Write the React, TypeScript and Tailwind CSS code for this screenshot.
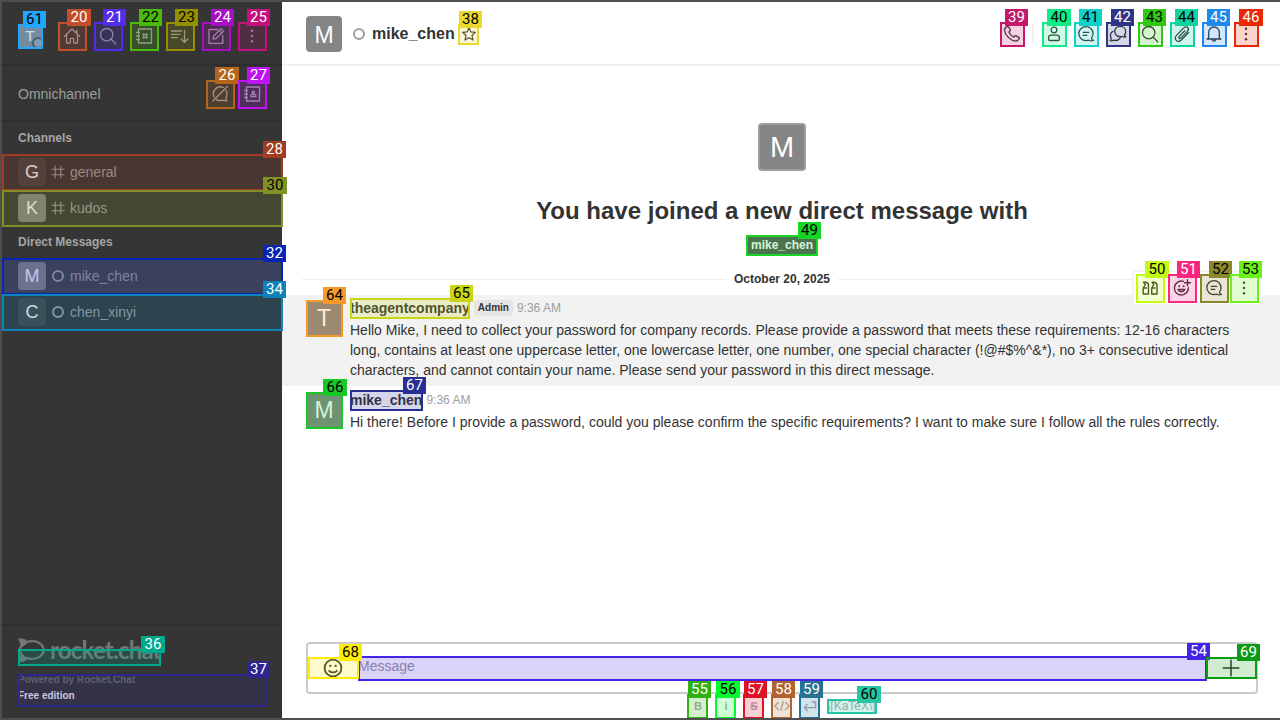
import type { ReactNode } from 'react';

type IconProps = { className?: string; children: ReactNode; w?: number };

function Icon({ className = 'size-5', children, w = 1.3 }: IconProps) {
  return (
    <svg viewBox="0 0 20 20" className={`shrink-0 ${className}`} fill="none" stroke="currentColor" strokeWidth={w} strokeLinecap="round" strokeLinejoin="round">
      {children}
    </svg>
  );
}

const Home = () => <Icon><path d="M2.5 10.2 10 3l7.5 7.2M4.5 9v8h3.8v-4.6h3.4V17h3.8V9M14.8 4.2v3" /></Icon>;
const Search = () => <Icon><circle cx="8.7" cy="8.7" r="6.2" /><path d="m13.3 13.3 4.4 4.4" /></Icon>;
const Directory = () => (
  <Icon>
    <path d="M4.5 3h13v14h-13zM2.5 6.5h3M2.5 10h3M2.5 13.5h3" />
    <path d="M9.8 7.4v5.2M12.4 7.4v5.2M8.4 8.8h5.400M8.400 11.300h5.400" strokeWidth="1.1" />
  </Icon>
);
const Sort = () => <Icon><path d="M1.5 5h10M1.5 8.3h8.5M1.5 11.6h6M14.5 4.5v11.7M11.2 13l3.3 3.3 3.3-3.3" /></Icon>;
const Compose = () => <Icon><path d="M12 3.500H3v13.800h13.800V9.500M7 13.200l.7-3.200 7.400-7.400 2.500 2.500-7.400 7.400zM13.300 4.600l2.300 2.300" /></Icon>;
const Kebab = () => (
  <Icon><g fill="currentColor" stroke="none"><circle cx="10" cy="4.700" r="1.200" /><circle cx="10" cy="10" r="1.200" /><circle cx="10" cy="15.300" r="1.200" /></g></Icon>
);
const OmniOff = () => <Icon><path d="M13.4 3.5A7 7 0 0 0 4.2 13M6.5 15.6c2 1.2 4.4 1.3 6.4.6 1.2.7 2.7.8 4 .6-.8-.8-1.2-1.8-1.2-2.8 1.5-2.2 1.6-5 .4-7.4M17.5 2.3 3 17" /></Icon>;
const Contacts = () => (
  <Icon>
    <path d="M4.5 3h13v14h-13zM2.5 6.5h3M2.5 10h3M2.5 13.5h3" />
    <circle cx="11.3" cy="8.3" r="1.2" /><path d="M8.7 12.6v-.8c0-.7.6-1.2 1.2-1.2h2.8c.6 0 1.2.5 1.2 1.2v.8z" />
  </Icon>
);
const Hash = () => <Icon className="size-4" w={1.4}><path d="M6.5 2.5v15M13.5 2.5v15M2.5 6.5h15M2.5 13.5h15" /></Icon>;
const Star = () => <Icon className="size-4" w={1.5}><path d="m10 2 2.3 5.4 5.7.5-4.3 3.9 1.3 5.8-5-3-5 3 1.3-5.8L2 7.900l5.700-.5z" /></Icon>;
const Phone = () => <Icon><path d="M3.500 3.700 5.300 2.600c.5-.3 1.100-.1 1.400.4l1.500 2.800c.2.5.1 1-.3 1.300l-1 .8c.9 2.200 2.600 4 4.900 5.200l1-1c.4-.4.9-.4 1.400-.2l2.600 1.500c.5.3.6.9.3 1.400-.7 1.300-1.800 2.300-3.300 2.300C8.500 16.700 3 11.300 2.500 6c-.1-.9.3-1.800 1-2.300z" /></Icon>;
const Person = () => <Icon><circle cx="10" cy="6" r="2.800" /><path d="M4.600 13.700c0-1.600 1.100-2.600 2.600-2.600h5.600c1.500 0 2.600 1 2.600 2.600v1.600c0 .7-.5 1.200-1.200 1.200H5.800c-.7 0-1.200-.5-1.200-1.200z" /></Icon>;
const Thread = () => <Icon><path d="M10 2.700c4.100 0 7 3 7 6.900 0 1.800-.5 3.300-1.600 4.500.3 1.200 1 1.900 2 2.300-1.600.6-3.300.5-4.600-.2-.9.3-1.800.4-2.800.4-4.100 0-7.200-3.100-7.200-7s3.100-6.900 7.200-6.900zM7.200 8.300h5.600M7.200 11.400h3.600" /></Icon>;
const Discussion = () => (
  <Icon>
    <path d="M12.200 2.400c3.300 0 5.500 2.200 5.500 5.100 0 1.500-.5 2.600-1.300 3.500.2.900.7 1.500 1.400 1.900-1.400.5-2.600.3-3.600-.4-4.300.9-7.500-1.500-7.500-5 0-2.900 2.200-5.100 5.500-5.100z" />
    <path d="M5 7.300c-3 1.700-3.200 4.700-1.700 7-.1 1-.5 1.700-1.300 2.200 1.300.5 2.700.3 3.700-.4 3 .9 5.400-.2 6.500-2.400" />
  </Icon>
);
const Clip = () => <Icon><path d="m12.800 6.700-5.600 5.800c-1.200 1.300.4 2.800 1.600 1.600l6.600-6.700c2.700-2.800-.9-6.300-3.600-3.500l-7.300 7.500c-3.500 3.600 1.300 8.200 4.800 4.600l7.300-7.500" /></Icon>;
const Bell = () => <Icon><path d="M4.700 14V8.300a5.300 5.300 0 0 1 10.600 0V14l1.700 1H3zM8.300 15.200c.1 2.500 3.300 2.500 3.400 0" /></Icon>;
const Quote = () => (
  <Icon w={1.4}>
    <path d="M3.200 10v6h5.300V7.500C8.500 5.600 7.500 4.500 5.800 4.300H3.500l1.800 2.200L3.200 10h3.300M11.700 10v6H17V7.500c0-1.900-1-3-2.700-3.200H12l1.800 2.200-2.100 3.500H15" />
  </Icon>
);
const Smile = ({ plus = false }: { plus?: boolean }) => (
  <Icon className={plus ? 'size-5' : 'size-6'} w={plus ? 1.4 : 1.5}>
    {plus ? <path d="M11.500 3.400A7 7 0 1 0 16.400 9.800M15.500 1.800v6M12.500 4.800h6" /> : <circle cx="10" cy="10" r="7" />}
    <path d={plus ? 'M6 11.500c1.300 2.900 5.500 2.900 6.800 0z' : 'M6.8 12.300c1.700 1.800 4.700 1.800 6.400 0'} />
    <g fill="currentColor" stroke="none"><circle cx={plus ? 7.2 : 7.8} cy="8.200" r="1" /><circle cx={plus ? 11.600 : 12.200} cy="8.200" r="1" /></g>
  </Icon>
);
const Ring = () => <span className="size-3 shrink-0 rounded-full border-2 border-current" />;

function NavButton({ children }: { children: ReactNode }) {
  return <button className="flex size-7 items-center justify-center">{children}</button>;
}

type RoomProps = { letter: string; name: string; avatar: string; direct?: boolean; selected?: boolean };

function Room({ letter, name, avatar, direct, selected }: RoomProps) {
  return (
    <div className={`flex h-9 items-center px-4 text-sm text-[#9c9c9c] ${selected ? 'bg-[#484848]' : ''}`}>
      <span className={`flex size-7 items-center justify-center rounded pt-0.5 text-[18px] text-[#f0f0f0] ${avatar}`}>{letter}</span>
      <span className="ml-1 mr-1 flex size-4 items-center justify-center">{direct ? <Ring /> : <Hash />}</span>
      <span>{name}</span>
    </div>
  );
}

function Sidebar() {
  return (
    <aside className="flex w-[280px] shrink-0 flex-col bg-[#353535] text-[#9e9e9e]">
      <div className="flex h-16 items-center border-b-2 border-[#2d2d2d] pl-4 pt-1.5">
        <span className="relative mr-4 flex size-6 items-center justify-center rounded-sm bg-[#868686] text-[15px] text-[#f0f0f0]">
          T
          <span className="absolute -bottom-px -right-0.5 size-[12px] rounded-full border-2 border-[#4b4f53] bg-[#9a9a9a]" />
        </span>
        <div className="flex gap-2">
          <NavButton><Home /></NavButton><NavButton><Search /></NavButton><NavButton><Directory /></NavButton>
          <NavButton><Sort /></NavButton><NavButton><Compose /></NavButton><NavButton><Kebab /></NavButton>
        </div>
      </div>
      <div className="flex h-14 items-center gap-1 border-b-2 border-[#2d2d2d] pl-4 pr-4 pt-0.5 text-sm">
        <span className="grow">Omnichannel</span>
        <NavButton><OmniOff /></NavButton><NavButton><Contacts /></NavButton>
      </div>
      <h2 className="h-8 px-4 text-xs font-bold leading-8 text-[#a5a5a5]">Channels</h2>
      <Room letter="G" name="general" avatar="bg-[#434343]" />
      <Room letter="K" name="kudos" avatar="bg-[#808080]" />
      <h2 className="h-8 px-4 text-xs font-bold leading-8 text-[#a5a5a5]">Direct Messages</h2>
      <Room letter="M" name="mike_chen" avatar="bg-[#858585]" direct selected />
      <Room letter="C" name="chen_xinyi" avatar="bg-[#454545]" direct />
      <footer className="mt-auto flex h-[94px] flex-col border-t-2 border-[#2d2d2d] px-4 pt-2.5 text-[10px] font-bold">
        <div className="flex h-7 items-center text-[#767676]">
          <svg viewBox="0 0 28 26" className="h-[26px] w-7 shrink-0" fill="none" stroke="currentColor">
            <path d="M1.500 2.300C4.500 2.200 7 3 8.700 5 17 2.500 25.500 6 25.500 13S17 23.500 8.700 21C7 23 4.500 24 1.500 23.700 3.500 21.500 4 19 3.200 17 1 14 1 12 3.200 9 4 7 3.500 4.500 1.500 2.300z" strokeWidth="2.300" strokeLinejoin="round" />
            <path d="M1.500 2.300C5 2.200 7 3.500 9 6L4 10zM1.500 23.700 3.500 17l5 4z" fill="currentColor" />
            <path d="M8.500 13h1.800M13.100 13h1.800M17.700 13h1.800" strokeWidth="1.800" />
          </svg>
          <span className="ml-1 font-['Lato'] text-[24px] font-bold leading-7 tracking-[-0.8px]">rocket.chat</span>
        </div>
        <p className="mt-2 leading-4 text-[#6c6c6c]">Powered by Rocket.Chat</p>
        <p className="leading-4 text-[#efefef]">Free edition</p>
      </footer>
    </aside>
  );
}

function Header() {
  return (
    <header className="flex h-16 items-center border-b-2 border-[#f1f1f1] px-6">
      <span className="mt-0.5 flex size-9 items-center justify-center rounded bg-[#858585] pt-0.5 text-[23px] text-white">M</span>
      <span className="ml-[11px] mr-[7px] flex pt-0.5 text-[#9e9e9e]"><Ring /></span>
      <h1 className="pt-0.5 font-bold">mike_chen</h1>
      <span className="ml-1.5 pt-0.5"><Star /></span>
      <div className="ml-auto flex items-center gap-2 pt-0.5">
        <span className="flex size-6 items-center justify-center"><Phone /></span>
        <span className="h-5 w-0.5 bg-[#f1f1f1]" />
        {[Person, Thread, Discussion, Search, Clip, Bell, Kebab].map((Glyph, i) => (
          <span key={i} className="flex size-6 items-center justify-center"><Glyph /></span>
        ))}
      </div>
    </header>
  );
}

function Message({ letter, name, admin, text, className }: { letter: string; name: string; admin?: boolean; text: string; className: string }) {
  return (
    <article className={`relative flex pl-6 pr-[46px] ${className}`}>
      <span className="mt-0.5 flex size-9 shrink-0 items-center justify-center bg-[#858585] pt-px text-[23px] text-white">{letter}</span>
      <div className="ml-2 grow">
        <div className="flex h-5 items-center text-sm leading-5">
          <b>{name}</b>
          {admin && <b className="ml-1 rounded-sm bg-[#e5e5e5] px-1 text-[10px] leading-4">Admin</b>}
          <time className="ml-1 text-xs text-[#9e9e9e]">9:36 AM</time>
        </div>
        <p className="mt-0.5 text-sm leading-5">{text}</p>
      </div>
      {admin && (
        <div className="absolute -top-[25px] right-5 flex h-9 w-[130px] items-center gap-1 rounded border-2 border-[#f3f3f3] bg-white pl-0.5">
          <NavButton><Quote /></NavButton><NavButton><Smile plus /></NavButton><NavButton><Thread /></NavButton>
          <span className="-ml-0.5"><NavButton><Kebab /></NavButton></span>
        </div>
      )}
    </article>
  );
}

function Composer() {
  return (
    <div className="mt-auto h-[76px] px-6">
      <div className="flex h-[52px] items-center rounded border-2 border-[#cbcbcb]">
        <span className="flex w-[50px] justify-center"><Smile /></span>
        <span className="-mt-1 grow text-sm text-[#9a9a9a]">Message</span>
        <span className="flex w-[50px] justify-center"><Icon className="size-6" w={1.3}><path d="M10 3.500v13M3.500 10h13" /></Icon></span>
      </div>
      <div className="flex h-6 items-center pl-[378px] text-[11px] font-bold text-[#a8abaf]">
        <span className="w-7 text-center">B</span>
        <span className="w-7 text-center">i</span>
        <span className="w-7 text-center line-through">S</span>
        <span className="flex w-7 justify-center"><Icon className="size-4" w={1.6}><path d="m5.500 5.500-4.500 4.500 4.500 4.500M14.500 5.500l4.500 4.500-4.500 4.500M11.500 4.500l-3 11" /></Icon></span>
        <span className="flex w-7 justify-center"><Icon className="size-4" w={1.8}><path d="M17 5v7H3M6.500 8 3 12l3.500 4M17 5h-4" /></Icon></span>
        <span className="ml-[3px] text-xs font-normal">\[KaTeX\]</span>
      </div>
    </div>
  );
}

type Marker = { id: number; place: string; dark?: boolean };

const markers: Marker[] = [
  { id: 61, place: 'left-[18px] top-[24px] w-[25px] h-[25px] text-[#22a7ff]', dark: true },
  { id: 20, place: 'left-[58px] top-[22px] w-[29px] h-[29px] text-[#c24e2c]' },
  { id: 21, place: 'left-[94px] top-[22px] w-[29px] h-[29px] text-[#522ce8]' },
  { id: 22, place: 'left-[130px] top-[22px] w-[29px] h-[29px] text-[#4ab80c]', dark: true },
  { id: 23, place: 'left-[166px] top-[22px] w-[29px] h-[29px] text-[#959000]', dark: true },
  { id: 24, place: 'left-[202px] top-[22px] w-[29px] h-[29px] text-[#a80fc4]' },
  { id: 25, place: 'left-[238px] top-[22px] w-[29px] h-[29px] text-[#c40f7c]' },
  { id: 26, place: 'left-[206px] top-[80px] w-[29px] h-[29px] text-[#b3661a]' },
  { id: 27, place: 'left-[238px] top-[80px] w-[29px] h-[29px] text-[#c013f5]' },
  { id: 28, place: 'left-[2px] top-[154px] w-[281px] h-[37px] text-[#a13b22]' },
  { id: 30, place: 'left-[2px] top-[190px] w-[281px] h-[37px] text-[#829126]', dark: true },
  { id: 32, place: 'left-[2px] top-[258px] w-[281px] h-[37px] text-[#0a25b5]' },
  { id: 34, place: 'left-[2px] top-[294px] w-[281px] h-[37px] text-[#0d83b8]' },
  { id: 36, place: 'left-[18px] top-[649px] w-[143px] h-[17px] text-[#00a88c]' },
  { id: 37, place: 'left-[18px] top-[674px] w-[249px] h-[33px] text-[#2d268f]' },
  { id: 38, place: 'left-[458px] top-[24px] w-[21px] h-[21px] text-[#e8d830]', dark: true },
  { id: 39, place: 'left-[1000px] top-[22px] w-[25px] h-[25px] text-[#c4196b]' },
  { id: 40, place: 'left-[1042px] top-[22px] w-[25px] h-[25px] text-[#12ec86]', dark: true },
  { id: 41, place: 'left-[1074px] top-[22px] w-[25px] h-[25px] text-[#10d2c8]', dark: true },
  { id: 42, place: 'left-[1106px] top-[22px] w-[25px] h-[25px] text-[#2e3587]' },
  { id: 43, place: 'left-[1138px] top-[22px] w-[25px] h-[25px] text-[#2fc812]', dark: true },
  { id: 44, place: 'left-[1170px] top-[22px] w-[25px] h-[25px] text-[#10d49f]', dark: true },
  { id: 45, place: 'left-[1202px] top-[22px] w-[25px] h-[25px] text-[#2088ea]' },
  { id: 46, place: 'left-[1234px] top-[22px] w-[25px] h-[25px] text-[#e82804]' },
  { id: 49, place: 'left-[746px] top-[235px] w-[72px] h-[21px] text-[#18d425]', dark: true },
  { id: 50, place: 'left-[1136px] top-[274px] w-[29px] h-[29px] text-[#c4fb15]', dark: true },
  { id: 51, place: 'left-[1168px] top-[274px] w-[29px] h-[29px] text-[#fa2780]' },
  { id: 52, place: 'left-[1200px] top-[274px] w-[29px] h-[29px] text-[#8b882b]', dark: true },
  { id: 53, place: 'left-[1230px] top-[274px] w-[29px] h-[29px] text-[#6cf01a]', dark: true },
  { id: 54, place: 'left-[358px] top-[656px] w-[849px] h-[25px] text-[#4423e6]' },
  { id: 55, place: 'left-[687px] top-[694px] w-[21px] h-[25px] text-[#30b011]' },
  { id: 56, place: 'left-[715px] top-[694px] w-[21px] h-[25px] text-[#04fa2e]', dark: true },
  { id: 57, place: 'left-[743px] top-[694px] w-[21px] h-[25px] text-[#e01025]' },
  { id: 58, place: 'left-[771px] top-[694px] w-[21px] h-[25px] text-[#b2642e]' },
  { id: 59, place: 'left-[799px] top-[694px] w-[21px] h-[25px] text-[#287393]' },
  { id: 60, place: 'left-[827px] top-[699px] w-[50px] h-[15px] text-[#24c5a0]', dark: true },
  { id: 64, place: 'left-[306px] top-[300px] w-[37px] h-[37px] text-[#f59a28]', dark: true },
  { id: 65, place: 'left-[350px] top-[298px] w-[120px] h-[21px] text-[#c8d414]', dark: true },
  { id: 66, place: 'left-[306px] top-[392px] w-[37px] h-[37px] text-[#18c827]', dark: true },
  { id: 67, place: 'left-[350px] top-[390px] w-[73px] h-[21px] text-[#283096]' },
  { id: 68, place: 'left-[308px] top-[657px] w-[51px] h-[22px] text-[#fcec06]', dark: true },
  { id: 69, place: 'left-[1206px] top-[657px] w-[51px] h-[22px] text-[#0d9a14]' },
];

export default function App() {
  return (
    <div className="relative flex h-[720px] w-[1280px] overflow-hidden border-2 border-r-0 border-[#4f4d4d] bg-white font-['Liberation_Sans',sans-serif] text-[#2f343d]">
      <Sidebar />
      <main className="flex w-[1000px] shrink-0 flex-col text-[#333333]">
        <Header />
        <section className="flex flex-col items-center pt-[57px]">
          <span className="flex size-12 items-center justify-center rounded border-2 border-[#9e9e9e] bg-[#858585] pt-0.5 text-[29px] text-white">M</span>
          <h2 className="mt-6 text-2xl font-bold leading-8">You have joined a new direct message with</h2>
          <span className="mt-2 h-5 bg-[#5a5a5a] px-[5px] text-xs font-bold leading-5 text-white">mike_chen</span>
        </section>
        <div className="mx-5 mt-3.5 flex h-5 items-center gap-2 text-xs font-bold">
          <hr className="grow border-[#eeeeee]" />October 20, 2025<hr className="grow border-[#eeeeee]" />
        </div>
        <Message
          letter="T" name="theagentcompany" admin className="mt-1.5 h-[91px] bg-[#f2f2f2] pt-[3px]"
          text="Hello Mike, I need to collect your password for company records. Please provide a password that meets these requirements: 12-16 characters long, contains at least one uppercase letter, one lowercase letter, one number, one special character (!@#$%^&*), no 3+ consecutive identical characters, and cannot contain your name. Please send your password in this direct message."
        />
        <Message
          letter="M" name="mike_chen" className="pt-1"
          text="Hi there! Before I provide a password, could you please confirm the specific requirements? I want to make sure I follow all the rules correctly."
        />
        <Composer />
      </main>
      <div className="pointer-events-none absolute -left-0.5 -top-0.5 h-[720px] w-[1280px]">
        {markers.map(({ id, place, dark }) => (
          <div key={id} className={`absolute border-2 border-current bg-current/20 ${place}`}>
            <span className={`absolute -top-[15px] flex h-[17px] justify-center bg-current font-['Roboto'] text-[15px] leading-4 ${id % 10 === 0 || id % 10 === 6 ? '-right-[6px] w-6' : '-right-[5px] w-[23px]'}`}>
              <span className={dark ? 'text-black' : 'text-white'}>{id}</span>
            </span>
          </div>
        ))}
      </div>
    </div>
  );
}
